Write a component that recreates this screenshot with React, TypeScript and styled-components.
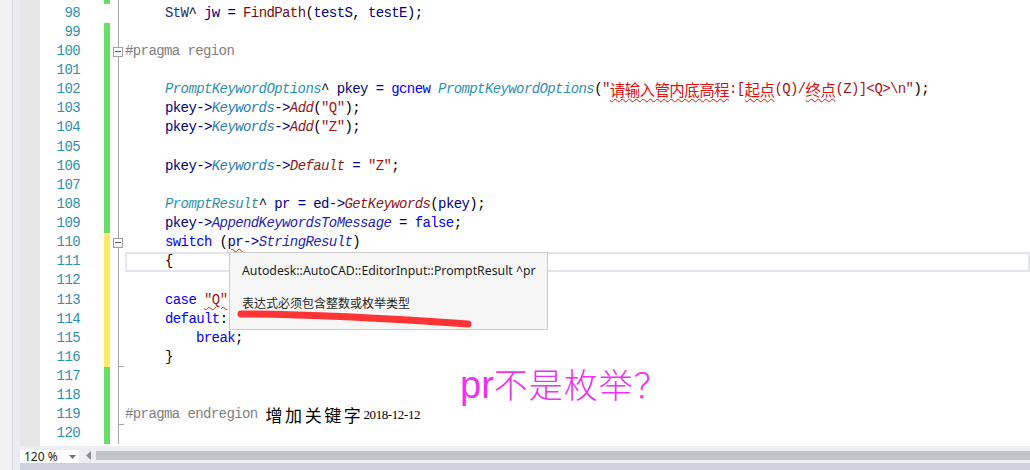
import React from 'react';
import styled, { createGlobalStyle, css } from 'styled-components';

const Global = createGlobalStyle`
  html, body { margin: 0; padding: 0; background: #ffffff; overflow: hidden; }
  body { width: 1030px; height: 470px; }
  #root { width: 1030px; height: 470px; }
`;

type Kind =
  | 'id' | 'kw' | 'type' | 'fn' | 'prop' | 'mem' | 'str' | 'cjkstr'
  | 'pp' | 'plain' | 'call' | 'var' | 'note' | 'noteNum';

type Tok = [string, Kind, boolean?];

const COLORS: Record<Kind, string> = {
  id: '#000080',
  var: '#1f2f6f',
  kw: '#0000ff',
  type: '#2b91af',
  fn: '#8b1a1a',
  prop: '#2b7fb0',
  mem: '#2424b8',
  str: '#a31515',
  cjkstr: '#e01010',
  pp: '#808080',
  plain: '#000000',
  call: '#6f1010',
  note: '#000000',
  noteNum: '#000000',
};

const ITALIC: Kind[] = ['type', 'fn', 'prop', 'mem'];

type Bar = 'g' | 'y' | null;
type Outline = 'line' | 'box' | 'end';

interface Line {
  n: number;
  label: string;
  bar: Bar;
  outline: Outline;
  indent: 0 | 1 | 2;
  current?: boolean;
  toks: Tok[];
}

const L = (n: number, bar: Bar, outline: Outline, indent: 0 | 1 | 2, toks: Tok[], current = false): Line => ({
  n, label: n === 97 ? '' : String(n), bar, outline, indent, toks, current,
});

const LINES: Line[] = [
  L(97, 'g', 'line', 1, []),
  L(98, null, 'line', 1, [
    ['StW', 'var'], ['^ ', 'plain'], ['jw', 'id'], [' = ', 'id'], ['FindPath', 'call'],
    ['(', 'plain'], ['testS', 'id'], [', ', 'plain'], ['testE', 'id'], [');', 'plain'],
  ]),
  L(99, 'g', 'line', 1, []),
  L(100, 'g', 'box', 0, [['#pragma region', 'pp']]),
  L(101, 'g', 'line', 1, []),
  L(102, 'g', 'line', 1, [
    ['PromptKeywordOptions', 'type'], ['^', 'plain'], [' pkey', 'id'], [' = ', 'id'], ['gcnew', 'kw'],
    [' ', 'plain'], ['PromptKeywordOptions', 'type'], ['(', 'plain'], ['"', 'str'],
    ['请输入管内底高程', 'cjkstr', true], [':[', 'str'], ['起点', 'cjkstr', true], ['(Q)/', 'str'],
    ['终点', 'cjkstr', true], ['(Z)]<Q>\\n"', 'str'], [');', 'plain'],
  ]),
  L(103, 'g', 'line', 1, [
    ['pkey->', 'id'], ['Keywords', 'prop'], ['->', 'id'], ['Add', 'fn'], ['(', 'plain'], ['"Q"', 'str'], [');', 'plain'],
  ]),
  L(104, 'g', 'line', 1, [
    ['pkey->', 'id'], ['Keywords', 'prop'], ['->', 'id'], ['Add', 'fn'], ['(', 'plain'], ['"Z"', 'str'], [');', 'plain'],
  ]),
  L(105, 'g', 'line', 1, []),
  L(106, 'g', 'line', 1, [
    ['pkey->', 'id'], ['Keywords', 'prop'], ['->', 'id'], ['Default', 'fn'], [' = ', 'id'], ['"Z"', 'str'], [';', 'plain'],
  ]),
  L(107, 'g', 'line', 1, []),
  L(108, 'g', 'line', 1, [
    ['PromptResult', 'type'], ['^', 'plain'], [' pr', 'id'], [' = ', 'id'], ['ed', 'id'], ['->', 'id'],
    ['GetKeywords', 'fn'], ['(', 'plain'], ['pkey', 'id'], [');', 'plain'],
  ]),
  L(109, 'g', 'line', 1, [
    ['pkey->', 'id'], ['AppendKeywordsToMessage', 'mem'], [' = ', 'id'], ['false', 'kw'], [';', 'plain'],
  ]),
  L(110, 'y', 'box', 1, [
    ['switch', 'kw'], [' (', 'plain'], ['pr', 'id', true], ['->', 'id'], ['StringResult', 'mem'], [')', 'plain'],
  ]),
  L(111, 'y', 'line', 1, [['{', 'plain']], true),
  L(112, 'y', 'line', 1, []),
  L(113, 'y', 'line', 1, [['case', 'kw'], [' ', 'plain'], ['"Q"', 'str', true], [':', 'plain']]),
  L(114, 'y', 'line', 1, [['default', 'kw'], [':', 'plain']]),
  L(115, 'y', 'line', 2, [['break', 'kw'], [';', 'plain']]),
  L(116, 'y', 'end', 1, [['}', 'plain']]),
  L(117, 'g', 'line', 1, []),
  L(118, 'g', 'line', 1, []),
  L(119, 'g', 'end', 0, [['#pragma endregion ', 'pp'], ['增加关键字', 'note'], ['2018-12-12', 'noteNum']]),
  L(120, 'g', 'line', 1, []),
];

const LINE_H = 19.14;
const INDENT = [0, 40, 71];

/* ---------- chrome ---------- */

const Page = styled.div`
  display: flex;
  width: 1030px;
  height: 470px;
  background: #ffffff;
`;

const LeftChrome = styled.div`
  display: flex;
  width: 20px;
  flex: none;
`;

const OuterStrip = styled.div`
  width: 12px;
  background: #f2f2f3;
  border-right: 1px solid #d3d3da;
`;

const InnerStrip = styled.div`
  flex: 1;
  background: #ececf0;
`;

const EditorPane = styled.div`
  flex: 1;
  display: flex;
  flex-direction: column;
  min-width: 0;
`;

const EditorBody = styled.div`
  position: relative;
  height: 446px;
  display: flex;
  overflow: hidden;
  background: #ffffff;
`;

const GlyphMargin = styled.div`
  width: 20px;
  flex: none;
  background: #e6e6e6;
`;

const LinesColumn = styled.div`
  flex: 1;
  display: flex;
  flex-direction: column;
  margin-top: -15.4px;
  font-family: "Liberation Mono", "Noto Sans CJK SC", monospace;
  font-size: 14px;
  letter-spacing: -0.6px;
`;

const Row = styled.div`
  display: grid;
  grid-template-columns: 40px 24px 6px 15px 1fr;
  height: ${LINE_H}px;
  flex: none;
`;

const LineNo = styled.div`
  color: #2b91af;
  text-align: right;
  line-height: ${LINE_H}px;
  white-space: pre;
`;

const Spacer = styled.div``;

const ChangeBar = styled.div<{ $bar: Bar }>`
  background: ${p => (p.$bar === 'g' ? '#6cdb6c' : p.$bar === 'y' ? '#feea6c' : 'transparent')};
`;

const OutlineCell = styled.div<{ $end: boolean }>`
  display: flex;
  align-items: center;
  background:
    ${p => (p.$end ? 'linear-gradient(#a5a5a5, #a5a5a5) 8px 100% / 6px 1px no-repeat,' : '')}
    linear-gradient(#a5a5a5, #a5a5a5) 8px 0 / 1px 100% no-repeat;
`;

const CollapseBox = styled.div`
  width: 10px;
  height: 10px;
  margin-left: 3px;
  box-sizing: border-box;
  border: 1px solid #a0a0a0;
  background: #ffffff;
  display: flex;
  align-items: center;
  justify-content: center;

  &::after {
    content: '';
    width: 6px;
    height: 1px;
    background: #555555;
  }
`;

const Code = styled.div<{ $indent: number; $current: boolean }>`
  display: flex;
  align-items: center;
  padding-left: ${p => p.$indent}px;
  white-space: pre;
  line-height: ${LINE_H}px;
  ${p => p.$current && css`box-shadow: inset 0 0 0 2px #e4e4ec;`}
`;

const Token = styled.span<{ $k: Kind; $wavy?: boolean }>`
  color: ${p => COLORS[p.$k]};
  font-style: ${p => (ITALIC.includes(p.$k) ? 'italic' : 'normal')};
  ${p => p.$k === 'cjkstr' && css`
    font-family: "Noto Sans CJK SC", sans-serif;
    font-size: 15.5px;
  `}
  ${p => p.$k === 'note' && css`
    font-family: "Noto Sans CJK SC", sans-serif;
    font-size: 17px;
    letter-spacing: 2.6px;
  `}
  ${p => p.$k === 'noteNum' && css`
    font-family: "Liberation Serif", serif;
    font-size: 13px;
    letter-spacing: -0.4px;
  `}
  ${p => p.$wavy && css`
    text-decoration: underline wavy #e51400;
    text-decoration-thickness: 1px;
    text-underline-offset: 2px;
  `}
`;

/* ---------- overlays ---------- */

const Tooltip = styled.div`
  position: absolute;
  left: 209px;
  top: 252px;
  width: 319px;
  height: 78px;
  box-sizing: border-box;
  background: #f6f6f6;
  border: 1px solid #cccccc;
  padding: 9px 0 0 12px;
  font-family: "Noto Sans", "Noto Sans CJK SC", sans-serif;
  font-size: 12.3px;
  color: #1e1e1e;
  line-height: 18px;
`;

const TipLine = styled.div<{ $gap?: number }>`
  margin-top: ${p => p.$gap ?? 0}px;
  white-space: nowrap;
`;

const TipCjk = styled(TipLine)`
  font-family: "Noto Sans CJK SC", sans-serif;
  font-size: 12px;
`;

const Scribble = styled.svg`
  position: absolute;
  left: 0;
  top: 0;
  overflow: visible;
  pointer-events: none;
`;

const Annotation = styled.div`
  position: absolute;
  left: 440px;
  top: 363px;
  line-height: 42px;
  color: #f030f0;
  white-space: nowrap;
`;

const AnnoLatin = styled.span`
  font-family: "Liberation Sans", sans-serif;
  font-size: 38px;
`;

const AnnoCjk = styled.span`
  font-family: "Noto Sans CJK SC", sans-serif;
  font-weight: 300;
  font-size: 34px;
  letter-spacing: 1px;
`;

/* ---------- bottom bar ---------- */

const BottomBar = styled.div`
  height: 17px;
  display: flex;
  align-items: flex-start;
  background: #eeeef2;
  padding-top: 4px;
  box-sizing: border-box;
`;

const ZoomBox = styled.div`
  width: 59px;
  height: 13px;
  background: #ffffff;
  display: flex;
  align-items: center;
  justify-content: space-between;
  padding: 0 3px 0 4px;
  box-sizing: border-box;
  font-family: "Noto Sans", sans-serif;
  font-size: 12px;
  color: #1e1e1e;
`;

const ArrowSvg = styled.svg`
  flex: none;
  margin: 1px 0 0 7px;
`;

const Track = styled.div`
  flex: 1;
  height: 9px;
  margin: 1px 0 0 5px;
  background: #c2c3c9;
`;

const BottomStrip = styled.div`
  height: 7px;
  background: #cfd1dc;
`;

const CodeLine: React.FC<{ line: Line }> = ({ line }) => (
  <Row>
    <LineNo>{line.label}</LineNo>
    <Spacer />
    <ChangeBar $bar={line.bar} />
    <OutlineCell $end={line.outline === 'end'}>
      {line.outline === 'box' && <CollapseBox />}
    </OutlineCell>
    <Code $indent={INDENT[line.indent]} $current={!!line.current}>
      {line.toks.map(([t, k, w], i) => (
        <Token key={i} $k={k} $wavy={w}>{t}</Token>
      ))}
    </Code>
  </Row>
);

export default function App() {
  return (
    <>
      <Global />
      <Page>
        <LeftChrome>
          <OuterStrip />
          <InnerStrip />
        </LeftChrome>
        <EditorPane>
          <EditorBody>
            <GlyphMargin />
            <LinesColumn>
              {LINES.map(l => (
                <CodeLine key={l.n} line={l} />
              ))}
            </LinesColumn>
            <Tooltip>
              <TipLine>Autodesk::AutoCAD::EditorInput::PromptResult ^pr</TipLine>
              <TipCjk $gap={14}>表达式必须包含整数或枚举类型</TipCjk>
              <Scribble width="319" height="78">
                <path
                  d="M 11 61 C 60 61, 150 65, 238 71"
                  stroke="#ff3434"
                  strokeWidth="7"
                  strokeLinecap="round"
                  fill="none"
                />
              </Scribble>
            </Tooltip>
            <Annotation>
              <AnnoLatin>pr</AnnoLatin>
              <AnnoCjk>不是枚举？</AnnoCjk>
            </Annotation>
          </EditorBody>
          <BottomBar>
            <ZoomBox>
              <span>120 %</span>
              <svg width="7" height="4" viewBox="0 0 7 4">
                <path d="M0 0 H7 L3.5 4 Z" fill="#717171" />
              </svg>
            </ZoomBox>
            <ArrowSvg width="5" height="9" viewBox="0 0 5 9">
              <path d="M5 0 V9 L0 4.5 Z" fill="#868999" />
            </ArrowSvg>
            <Track />
          </BottomBar>
          <BottomStrip />
        </EditorPane>
      </Page>
    </>
  );
}
